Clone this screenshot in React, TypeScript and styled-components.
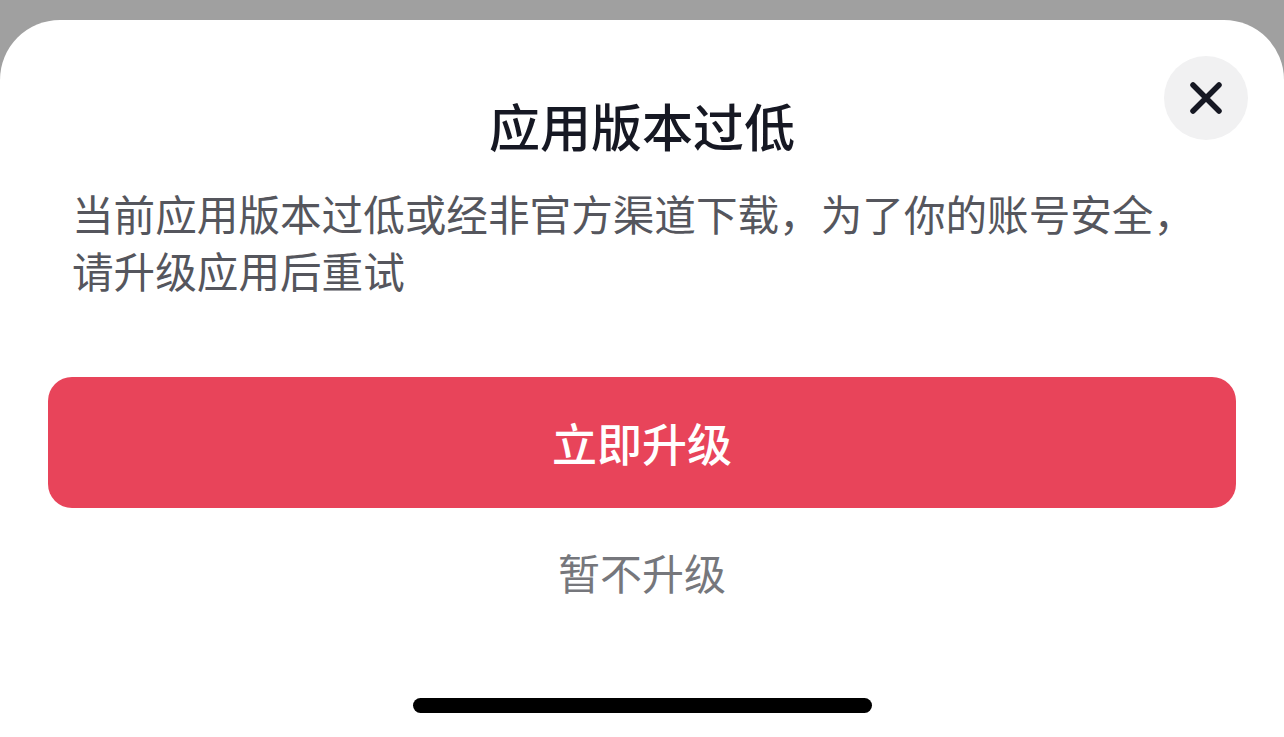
import styled, { createGlobalStyle } from 'styled-components';

const GlobalStyle = createGlobalStyle`
  html, body {
    margin: 0;
    padding: 0;
    background: #a0a0a0;
  }
  body {
    font-family: "Noto Sans CJK SC", "Noto Sans", sans-serif;
  }
`;

const Screen = styled.div`
  width: 1284px;
  height: 737px;
  padding-top: 20px;
  box-sizing: border-box;
  overflow: hidden;
`;

const Sheet = styled.div`
  position: relative;
  height: 717px;
  background: #ffffff;
  border-radius: 60px 60px 0 0;
  padding: 69px 48px 0;
  box-sizing: border-box;
  display: flex;
  flex-direction: column;
  align-items: stretch;
`;

const CloseButton = styled.button`
  position: absolute;
  top: 36px;
  right: 36px;
  width: 84px;
  height: 84px;
  border: none;
  border-radius: 50%;
  background: #f1f1f2;
  display: flex;
  align-items: center;
  justify-content: center;
  padding: 0;
  cursor: pointer;
`;

const Title = styled.h1`
  margin: 0;
  font-size: 51px;
  line-height: 72px;
  font-weight: 500;
  color: #161823;
  text-align: center;
`;

const Message = styled.p`
  margin: 24px 0 0;
  padding: 0 24px;
  font-size: 41.6px;
  line-height: 57px;
  color: #55565d;
  font-weight: 400;
  white-space: nowrap;
`;

const PrimaryButton = styled.button`
  margin-top: 78px;
  height: 131px;
  border: none;
  border-radius: 24px;
  background: #e8445a;
  color: #ffffff;
  font-family: inherit;
  font-size: 45px;
  font-weight: 500;
  cursor: pointer;
`;

const SecondaryButton = styled.button`
  margin-top: 34px;
  align-self: center;
  border: none;
  background: none;
  padding: 0;
  height: 60px;
  line-height: 60px;
  font-family: inherit;
  font-size: 42px;
  color: #76777c;
  cursor: pointer;
`;

const HomeIndicator = styled.div`
  margin: 96px auto 0;
  width: 459px;
  height: 15px;
  border-radius: 8px;
  background: #000000;
`;

const CloseIcon = () => (
  <svg width="36" height="36" viewBox="0 0 36 36" fill="none">
    <path d="M5 5 L31 31 M31 5 L5 31" stroke="#161823" strokeWidth="5.5" strokeLinecap="round" />
  </svg>
);

const App = (): JSX.Element => (
  <Screen>
    <GlobalStyle />
    <Sheet>
      <CloseButton aria-label="关闭">
        <CloseIcon />
      </CloseButton>
      <Title>应用版本过低</Title>
      <Message>
        当前应用版本过低或经非官方渠道下载，为了你的账号安全，
        <br />
        请升级应用后重试
      </Message>
      <PrimaryButton>立即升级</PrimaryButton>
      <SecondaryButton>暂不升级</SecondaryButton>
      <HomeIndicator />
    </Sheet>
  </Screen>
);

export default App;
